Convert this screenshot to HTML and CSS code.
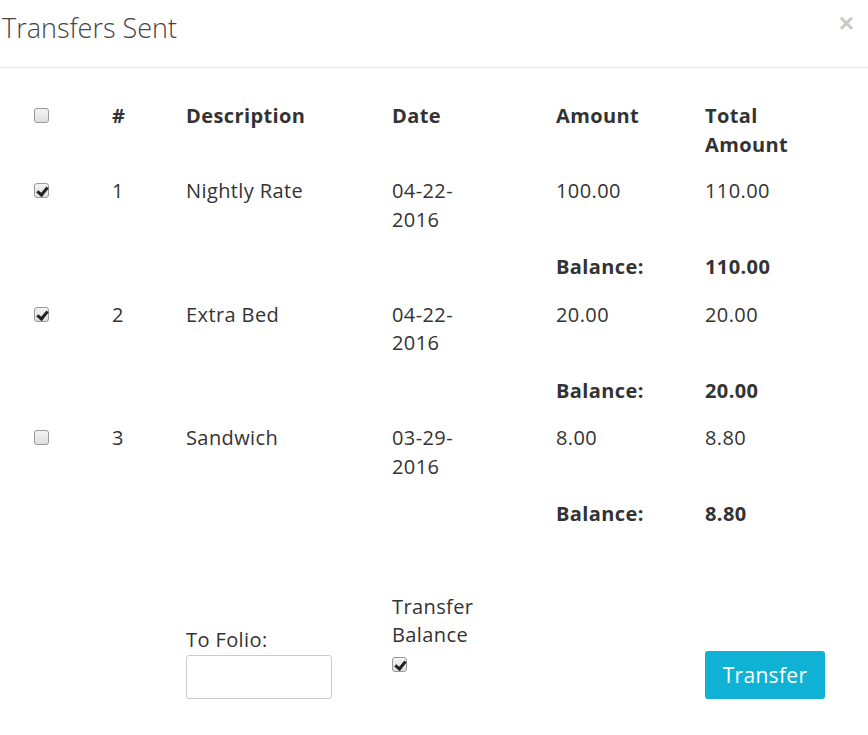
FILE: index.html
```html
<!DOCTYPE html>
<html>
<head>
<meta charset="utf-8">
<link rel="stylesheet" href="styles.css">
</head>
<body>
<div class="modal">
  <div class="modal-header">
    <h4 class="modal-title">Transfers Sent</h4>
    <span class="close">&times;</span>
  </div>
  <div class="modal-body">
    <table class="grid">
      <colgroup>
        <col class="c1"><col class="c2"><col class="c3"><col class="c4"><col class="c5"><col class="c6">
      </colgroup>
      <thead>
        <tr>
          <th><input type="checkbox" class="cb"></th>
          <th>#</th>
          <th>Description</th>
          <th>Date</th>
          <th>Amount</th>
          <th>Total Amount</th>
        </tr>
      </thead>
      <tbody>
        <tr>
          <td><input type="checkbox" class="cb" checked></td>
          <td>1</td>
          <td>Nightly Rate</td>
          <td><span class="date">04-22-2016</span></td>
          <td>100.00</td>
          <td>110.00</td>
        </tr>
        <tr class="bal">
          <td></td><td></td><td></td><td></td>
          <td>Balance:</td>
          <td>110.00</td>
        </tr>
        <tr>
          <td><input type="checkbox" class="cb" checked></td>
          <td>2</td>
          <td>Extra Bed</td>
          <td><span class="date">04-22-2016</span></td>
          <td>20.00</td>
          <td>20.00</td>
        </tr>
        <tr class="bal">
          <td></td><td></td><td></td><td></td>
          <td>Balance:</td>
          <td>20.00</td>
        </tr>
        <tr>
          <td><input type="checkbox" class="cb"></td>
          <td>3</td>
          <td>Sandwich</td>
          <td><span class="date">03-29-2016</span></td>
          <td>8.00</td>
          <td>8.80</td>
        </tr>
        <tr class="bal">
          <td></td><td></td><td></td><td></td>
          <td>Balance:</td>
          <td>8.80</td>
        </tr>
        <tr class="spacer">
          <td colspan="6"></td>
        </tr>
        <tr class="foot">
          <td></td>
          <td></td>
          <td>
            <label class="folio-label">To Folio:</label>
            <input type="text" class="folio">
          </td>
          <td class="tb-cell">
            <label class="tb-label">Transfer Balance</label>
            <input type="checkbox" class="cb tb-cb" checked>
          </td>
          <td></td>
          <td><button class="btn-transfer">Transfer</button></td>
        </tr>
      </tbody>
    </table>
  </div>
</div>
</body>
</html>
```

FILE: styles.css
```css
html, body {
  margin: 0;
  padding: 0;
  background: #fff;
}
body {
  font-family: "Open Sans", "Liberation Sans", sans-serif;
  color: #333;
  font-size: 20px;
  line-height: 28.5px;
}
.modal {
  width: 868px;
}
.modal-header {
  display: flex;
  align-items: flex-start;
  justify-content: space-between;
  height: 68px;
  box-sizing: border-box;
  border-bottom: 1px solid #e5e5e5;
  padding: 0 14px 0 2px;
}
.modal-title {
  margin: 9px 0 0 0;
  font-size: 27px;
  font-weight: 300;
  line-height: 38px;
  color: #444;
}
.close {
  font-family: "Liberation Sans", sans-serif;
  font-size: 26px;
  font-weight: bold;
  line-height: 26px;
  margin-top: 10px;
  color: #c8c8c8;
}
.modal-body {
  padding: 24px 26px 0 26px;
}
.grid {
  width: 816px;
  table-layout: fixed;
  border-collapse: collapse;
  letter-spacing: 0.4px;
}
.c1 { width: 78px; }
.c2 { width: 74px; }
.c3 { width: 206px; }
.c4 { width: 164px; }
.c5 { width: 149px; }
.c6 { width: 145px; }
.grid th, .grid td {
  padding: 9px 8px;
  border-top: 1px solid transparent;
  text-align: left;
  vertical-align: top;
}
.grid th {
  font-weight: bold;
  padding-bottom: 8px;
}
.bal td {
  font-weight: bold;
}
.spacer td {
  height: 26px;
  padding: 9px 8px;
}
.date {
  display: inline-block;
  width: 78px;
}
.cb {
  -webkit-appearance: none;
  appearance: none;
  width: 15px;
  height: 15px;
  margin: 6px 0 0 0;
  border: 1px solid #9a9a9a;
  border-radius: 3px;
  background: linear-gradient(#f4f4f4, #dedede);
  box-sizing: border-box;
  position: relative;
  vertical-align: top;
}
.cb:checked::after {
  content: "";
  position: absolute;
  left: 4px;
  top: 1px;
  width: 4px;
  height: 8px;
  border: solid #222;
  border-width: 0 3px 3px 0;
  transform: rotate(40deg);
}
.foot td {
  vertical-align: top;
}
.folio-label {
  display: block;
  margin-top: 33px;
}
.folio {
  display: block;
  width: 146px;
  height: 44px;
  box-sizing: border-box;
  border: 1px solid #ccc;
  border-radius: 3px;
  margin: 1px 0 0 0;
}
.tb-label {
  display: block;
  width: 95px;
}
.tb-cb {
  margin-top: 7px;
}
.btn-transfer {
  margin-top: 58px;
  width: 120px;
  height: 48px;
  border: none;
  border-radius: 3px;
  background: #0fb1d4;
  color: #fff;
  font-family: "Open Sans", "Liberation Sans", sans-serif;
  font-size: 21px;
  letter-spacing: 0.3px;
  padding: 0;
}
```
